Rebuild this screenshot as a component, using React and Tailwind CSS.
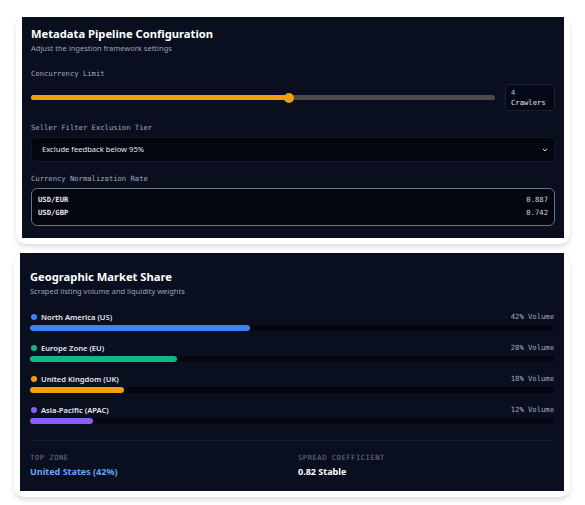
import React from 'react';

const sans = { fontFamily: '"Noto Sans", "Open Sans", sans-serif' };

const regions = [
  { name: 'North America (US)', share: 42, dot: 'bg-[#3b82f6]', bar: 'bg-[#3b82f6]' },
  { name: 'Europe Zone (EU)', share: 28, dot: 'bg-[#10b981]', bar: 'bg-[#10b981]' },
  { name: 'United Kingdom (UK)', share: 18, dot: 'bg-[#f59e0b]', bar: 'bg-[#f59e0b]' },
  { name: 'Asia-Pacific (APAC)', share: 12, dot: 'bg-[#8b5cf6]', bar: 'bg-[#8b5cf6]' },
];

const rates = [
  { pair: 'USD/EUR', value: '0.887' },
  { pair: 'USD/GBP', value: '0.742' },
];

function Label({ children }) {
  return (
    <div className="font-['DejaVu_Sans_Mono',monospace] text-[7.2px] leading-[10px] text-[#a3abb8]">
      {children}
    </div>
  );
}

// white frame with a soft drop shadow around each dark panel
function Card({ children, frame = '', className = '' }) {
  return (
    <div className={`rounded-[10px] bg-white shadow-[0_3px_5px_rgba(0,0,0,0.13)] px-[6px] pb-[6px] ${frame}`}>
      <div className={`bg-[#0a0f1f] ${className}`}>{children}</div>
    </div>
  );
}

function PipelineConfig() {
  const concurrency = 4;
  const pct = 55.5;

  return (
    <Card frame="ml-[16px] mr-[15px]" className="px-[9px] pt-[10px] pb-[12px]">
      <h2 className="text-[11.2px] font-bold text-white leading-[14px]">Metadata Pipeline Configuration</h2>
      <p className="text-[7.5px] text-[#9ca3af] leading-[10px] mt-[2px]">Adjust the ingestion framework settings</p>

      <div className="mt-[16px]">
        <Label>Concurrency Limit</Label>
        <div className="flex items-center gap-[10px] mt-[5px]">
          <div className="relative flex-1 h-[5px] rounded-full bg-[#4b4b4b]">
            <div className="absolute left-0 top-0 h-full rounded-full bg-[#f59e0b]" style={{ width: `${pct}%` }} />
            <div
              className="absolute top-1/2 w-[10px] h-[10px] -mt-[5px] -ml-[5px] rounded-full bg-[#f59e0b]"
              style={{ left: `${pct}%` }}
            />
          </div>
          <div className="w-[50px] h-[27px] rounded-[3px] border border-[#1a2133] bg-[#050816] px-[5px] py-[3px] font-['DejaVu_Sans_Mono',monospace] text-[7.2px] leading-[10px]">
            <div className="text-[#93c5fd]">{concurrency}</div>
            <div className="text-[#e5e7eb]">Crawlers</div>
          </div>
        </div>
      </div>

      <div className="mt-[12px]">
        <Label>Seller Filter Exclusion Tier</Label>
        <div className="mt-[4px] h-[25px] rounded-[5px] border border-[#111827] bg-[#03050f] flex items-center justify-between pl-[10px] pr-[5px]">
          <span className="text-[7.6px] text-[#e5e7eb]">Exclude feedback below 95%</span>
          <svg width="8" height="8" viewBox="0 0 24 24" fill="none" stroke="#d1d5db" strokeWidth="3" strokeLinecap="round" strokeLinejoin="round">
            <path d="m6 9 6 6 6-6" />
          </svg>
        </div>
      </div>

      <div className="mt-[12px]">
        <Label>Currency Normalization Rate</Label>
        <div className="mt-[4px] rounded-[6px] border border-[#6b7280] bg-[#03050f] px-[6px] pt-[6px] pb-[7px] flex flex-col gap-[3px]">
          {rates.map((r) => (
            <div key={r.pair} className="flex justify-between font-['DejaVu_Sans_Mono',monospace] text-[7.2px] leading-[10px]">
              <span className="font-bold text-[#e5e7eb]">{r.pair}</span>
              <span className="text-[#d1d5db]">{r.value}</span>
            </div>
          ))}
        </div>
      </div>
    </Card>
  );
}

function MarketShare() {
  return (
    <Card frame="ml-[14px] mr-[15px]" className="px-[10px] pt-[17px] pb-[13px]">
      <h2 className="text-[11.2px] font-bold text-white leading-[14px]">Geographic Market Share</h2>
      <p className="text-[7.5px] text-[#9ca3af] leading-[10px] mt-[2px]">Scraped listing volume and liquidity weights</p>

      <div className="mt-[15px] flex flex-col gap-[11px]">
        {regions.map((r) => (
          <div key={r.name}>
            <div className="flex items-center justify-between h-[12px]">
              <div className="flex items-center gap-[4px] pl-[1px]">
                <span className={`w-[6px] h-[6px] rounded-full ${r.dot}`} />
                <span className="text-[7.6px] font-semibold text-[#e5e7eb] leading-[12px]">{r.name}</span>
              </div>
              <span className="font-['DejaVu_Sans_Mono',monospace] text-[7.2px] text-[#a3abb8]">{r.share}% Volume</span>
            </div>
            <div className="mt-[2px] h-[6px] rounded-full bg-[#030712]">
              <div className={`h-full rounded-full ${r.bar}`} style={{ width: `${r.share}%` }} />
            </div>
          </div>
        ))}
      </div>

      <div className="mt-[16px] border-t border-[#161d2e] pt-[12px] grid grid-cols-2 gap-3">
        <div>
          <div className="font-['DejaVu_Sans_Mono',monospace] text-[7.2px] leading-[10px] tracking-[0.5px] text-[#6b7280] uppercase">Top Zone</div>
          <div className="mt-[3px] text-[9px] leading-[12px] font-bold text-[#60a5fa]">United States (42%)</div>
        </div>
        <div>
          <div className="font-['DejaVu_Sans_Mono',monospace] text-[7.2px] leading-[10px] tracking-[0.5px] text-[#6b7280] uppercase">Spread Coefficient</div>
          <div className="mt-[3px] text-[9px] leading-[12px] font-bold text-white">0.82 Stable</div>
        </div>
      </div>
    </Card>
  );
}

export default function App() {
  return (
    <div className="min-h-screen bg-white pt-[17px] pb-[10px] flex flex-col gap-[9px]" style={sans}>
      <PipelineConfig />
      <MarketShare />
    </div>
  );
}
